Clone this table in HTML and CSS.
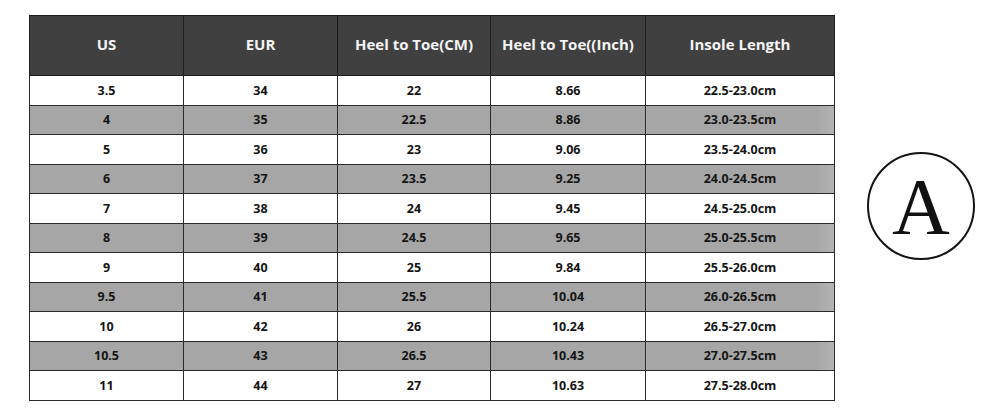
FILE: index.html
```html
<!DOCTYPE html>
<html lang="en">
<head>
<meta charset="utf-8">
<title>Size Chart</title>
<link rel="stylesheet" href="styles.css">
</head>
<body>
<div class="page">
  <table class="chart">
    <colgroup>
      <col class="c1"><col class="c2"><col class="c3"><col class="c4"><col class="c5">
    </colgroup>
    <thead>
      <tr>
        <th>US</th><th>EUR</th><th>Heel to Toe(CM)</th><th>Heel to Toe((Inch)</th><th>Insole Length</th>
      </tr>
    </thead>
    <tbody>
      <tr><td>3.5</td><td>34</td><td>22</td><td>8.66</td><td>22.5-23.0cm</td></tr>
      <tr class="alt"><td>4</td><td>35</td><td>22.5</td><td>8.86</td><td>23.0-23.5cm</td></tr>
      <tr><td>5</td><td>36</td><td>23</td><td>9.06</td><td>23.5-24.0cm</td></tr>
      <tr class="alt"><td>6</td><td>37</td><td>23.5</td><td>9.25</td><td>24.0-24.5cm</td></tr>
      <tr><td>7</td><td>38</td><td>24</td><td>9.45</td><td>24.5-25.0cm</td></tr>
      <tr class="alt"><td>8</td><td>39</td><td>24.5</td><td>9.65</td><td>25.0-25.5cm</td></tr>
      <tr><td>9</td><td>40</td><td>25</td><td>9.84</td><td>25.5-26.0cm</td></tr>
      <tr class="alt"><td>9.5</td><td>41</td><td>25.5</td><td>10.04</td><td>26.0-26.5cm</td></tr>
      <tr><td>10</td><td>42</td><td>26</td><td>10.24</td><td>26.5-27.0cm</td></tr>
      <tr class="alt"><td>10.5</td><td>43</td><td>26.5</td><td>10.43</td><td>27.0-27.5cm</td></tr>
      <tr><td>11</td><td>44</td><td>27</td><td>10.63</td><td>27.5-28.0cm</td></tr>
    </tbody>
  </table>
  <div class="badge"><span class="letter">A</span></div>
</div>
</body>
</html>
```
FILE: styles.css
```css
html, body {
  margin: 0;
  padding: 0;
  background: #ffffff;
}
.page {
  display: flex;
  align-items: flex-start;
  padding: 15px 0 0 29px;
  gap: 32px;
}
.chart {
  border-collapse: collapse;
  table-layout: fixed;
  width: 805px;
  font-family: "Open Sans", "Liberation Sans", sans-serif;
  font-weight: 700;
  color: #151515;
}
.c1 { width: 154px; }
.c2 { width: 154px; }
.c3 { width: 153px; }
.c4 { width: 155px; }
.c5 { width: 189px; }
.chart th, .chart td {
  border: 1px solid #2a2a2a;
  text-align: center;
  padding: 0;
}
.chart th {
  height: 56px;
  padding-bottom: 3px;
  background: #404040;
  color: #f4f4f4;
  font-size: 15px;
  border-color: #1e1e1e;
}
.chart td {
  height: 28.5px;
  font-size: 12.5px;
  background: #ffffff;
}
.chart tr.alt td {
  background: #a6a6a6;
}
.chart tr.alt td:last-child {
  background: linear-gradient(to right, #a6a6a6 0%, #a6a6a6 90%, #b4b4b4 100%);
}
.badge {
  margin-top: 137px;
  width: 104px;
  height: 104px;
  border: 2px solid #141414;
  border-radius: 50%;
  display: flex;
  align-items: center;
  justify-content: center;
}
.letter {
  font-family: "Liberation Serif", "DejaVu Serif", serif;
  font-size: 80px;
  line-height: 1;
  color: #111111;
  margin-top: 2px;
}
```
